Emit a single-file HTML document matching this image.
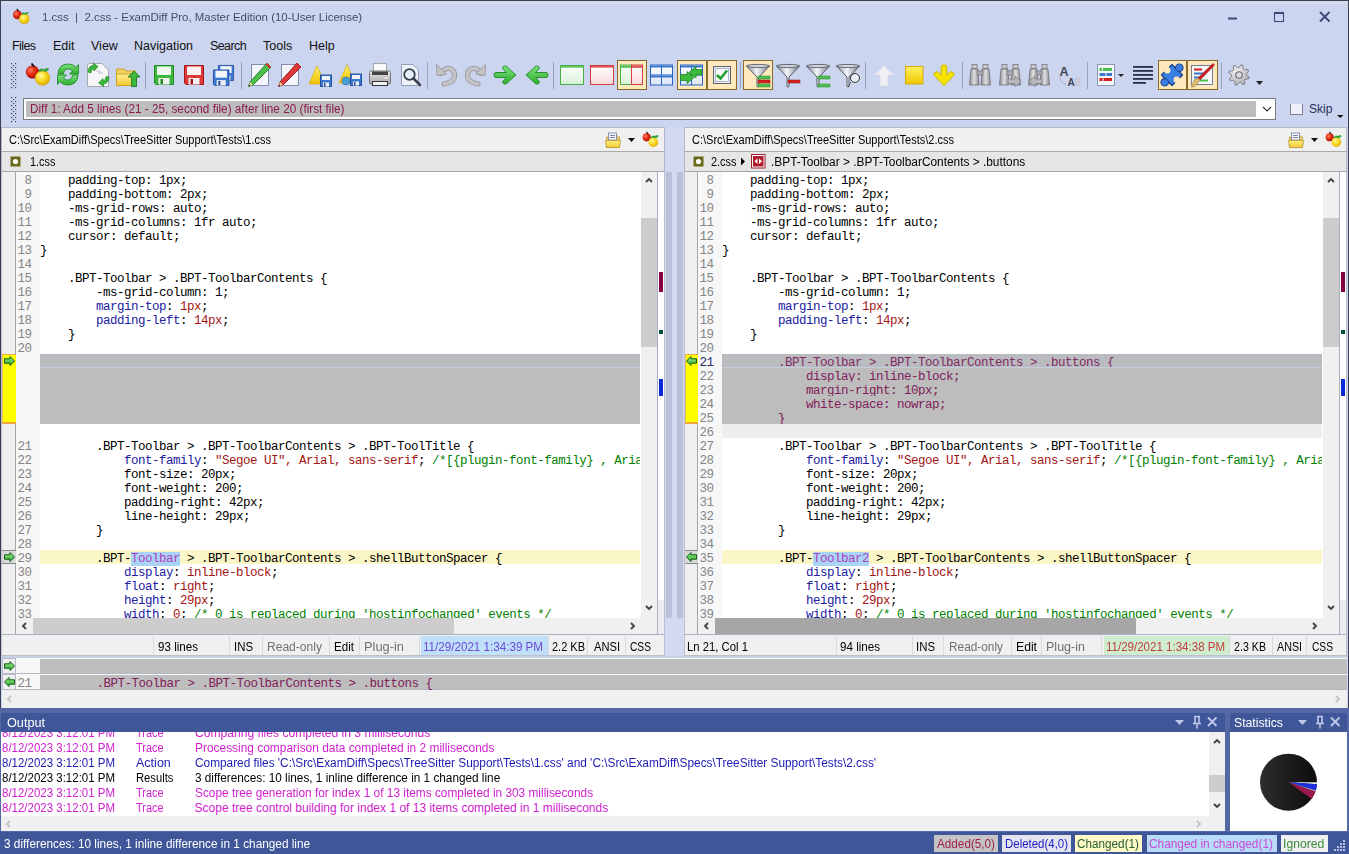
<!DOCTYPE html><html><head><meta charset="utf-8"><style>
*{margin:0;padding:0;box-sizing:border-box}
html,body{width:1349px;height:854px;overflow:hidden}
body{position:relative;background:#ccd5ef;font-family:"Liberation Sans",sans-serif;font-size:12px;color:#000}
.a{position:absolute}
.t{position:absolute;white-space:pre;line-height:14px}
.m{position:absolute;font-family:"Liberation Mono",monospace;font-size:12.5px;letter-spacing:-0.5px;white-space:pre;line-height:14px;height:14px}
.ln{position:absolute;font-family:"Liberation Mono",monospace;font-size:12.5px;letter-spacing:-0.5px;white-space:pre;line-height:14px;color:#848484;text-align:right;width:40px}
</style></head><body><div class="a" style="left:0;top:0;width:1349px;height:1px;background:#3b3f52"></div>
<div class="a" style="left:0;top:0;width:1px;height:854px;background:#3b3f52"></div>
<div class="a" style="left:1348px;top:0;width:1px;height:854px;background:#3b3f52"></div>
<div class="t" style="left:42px;top:10px;font-size:11.5px;color:#434b6e;transform:scaleX(0.995);transform-origin:0 0;">1.css  |  2.css - ExamDiff Pro, Master Edition (10-User License)</div>
<div class="t" style="left:12px;top:39px;font-size:12.5px;color:#111;letter-spacing:-0.6px">Files</div>
<div class="t" style="left:53px;top:39px;font-size:12.5px;color:#111;letter-spacing:0px">Edit</div>
<div class="t" style="left:91px;top:39px;font-size:12.5px;color:#111;letter-spacing:0px">View</div>
<div class="t" style="left:134px;top:39px;font-size:12.5px;color:#111;letter-spacing:0px">Navigation</div>
<div class="t" style="left:210px;top:39px;font-size:12.5px;color:#111;letter-spacing:-0.6px">Search</div>
<div class="t" style="left:263px;top:39px;font-size:12.5px;color:#111;letter-spacing:0px">Tools</div>
<div class="t" style="left:309px;top:39px;font-size:12.5px;color:#111;letter-spacing:0px">Help</div>
<svg class="a" style="left:1220px;top:8px" width="120" height="20"><rect x="8" y="9.5" width="9" height="2" fill="#3c4878"/><rect x="54.5" y="4.5" width="9" height="9" fill="none" stroke="#3c4878" stroke-width="1.1"/><rect x="54" y="4" width="10" height="2" fill="#3c4878"/><path d="M100 4 L109.5 13.5 M109.5 4 L100 13.5" stroke="#3c4878" stroke-width="1.9"/></svg>
<svg class="a" style="left:13px;top:8px" width="18" height="18"><g transform="scale(0.68)"><circle cx="6.5" cy="10" r="6.3" fill="url(#gRed)" stroke="#a01010" stroke-width="0.6"/>
<path d="M5.5 1.5 Q7 2.5 8 5" stroke="#111" stroke-width="1.6" fill="none"/>
<circle cx="16.5" cy="16" r="7.3" fill="url(#gOr)" stroke="#d0a000" stroke-width="0.6"/>
<path d="M13 9 Q14 5.5 17.5 7.5 Q16 10 13 9 Z M17 9 Q19.5 5 23 7 Q21 10.5 17 9 Z" fill="#39b43a" stroke="#1e7a20" stroke-width="0.5"/></g></svg>
<div class="a" style="left:1px;top:1px;width:1347px;height:5px;background:linear-gradient(#d8dced,#d3d8ec 60%,#ccd5ef)"></div>
<div class="a" style="left:23px;top:98px;width:1253px;height:22px;background:#fff;border:1px solid #7a7a7a"></div>
<div class="a" style="left:26px;top:101px;width:1230px;height:16px;background:#bdbdbd"></div>
<div class="t" style="left:30px;top:102px;font-size:12px;color:#8b1a4f;transform:scaleX(0.979);transform-origin:0 0;">Diff 1: Add 5 lines (21 - 25, second file) after line 20 (first file)</div>
<svg class="a" style="left:1260px;top:104px" width="90" height="18"><path d="M3 3 L7 7 L11 3" fill="none" stroke="#333" stroke-width="1.1"/><rect x="30.5" y="-1.5" width="12" height="12" fill="#eef1fa" stroke="#7c8294" stroke-width="1"/><path d="M77 11 L83.5 11 L80.25 14 Z" fill="#111"/></svg>
<div class="t" style="left:1309px;top:102px;font-size:12px;color:#283058">Skip</div>
<div class="a" style="left:665px;top:127px;width:19px;height:529px;background:#d3d9ee"></div>
<div class="a" style="left:666px;top:172px;width:6px;height:446px;background:#b9c1da"></div>
<div class="a" style="left:677px;top:172px;width:6px;height:446px;background:#b9c1da"></div>
<div class="a" style="left:672px;top:172px;width:5px;height:446px;background:#d5dbee"></div>
<div class="a" style="left:1px;top:127px;width:664px;height:25px;background:#f0f0f0;border:1px solid #b4b8c4;border-bottom-color:#aaaaaa"></div>
<div class="t" style="left:9px;top:133px;font-size:12px;color:#000;transform:scaleX(0.918);transform-origin:0 0;">C:\Src\ExamDiff\Specs\TreeSitter Support\Tests\1.css</div>
<div class="a" style="left:1px;top:152px;width:664px;height:20px;background:#e6e6e6;border-left:1px solid #b4b8c4;border-right:1px solid #b4b8c4;border-bottom:1px solid #a0a4ae"></div>
<svg class="a" style="left:10px;top:156px" width="12" height="12"><rect x="0.5" y="0.5" width="10" height="10" fill="#6b6a1a"/><circle cx="5.5" cy="5.5" r="2.6" fill="#fff"/></svg>
<div class="t" style="left:29.5px;top:155px;font-size:12px;color:#000;transform:scaleX(0.911);transform-origin:0 0;">1.css</div>
<div class="a" style="left:1px;top:172px;width:664px;height:463px;background:#fff;border-left:1px solid #bcc0cc;border-right:1px solid #bcc0cc;border-bottom:1px solid #a8b0c4"></div>
<div class="a" style="left:2px;top:172px;width:13px;height:462px;background:#efefef"></div>
<div class="a" style="left:15px;top:172px;width:1px;height:462px;background:#a6a6a6"></div>
<div class="a" style="left:16px;top:172px;width:24px;height:446px;background:#f7f7f7"></div>
<div class="ln" style="left:-8.5px;top:174px;height:15px;overflow:hidden;color:#858585">8</div>
<div class="m" style="left:40px;top:174px;width:600px;height:15px;overflow:hidden"><span style="color:#000">    padding-top: 1px;</span></div>
<div class="ln" style="left:-8.5px;top:188px;height:15px;overflow:hidden;color:#858585">9</div>
<div class="m" style="left:40px;top:188px;width:600px;height:15px;overflow:hidden"><span style="color:#000">    padding-bottom: 2px;</span></div>
<div class="ln" style="left:-8.5px;top:202px;height:15px;overflow:hidden;color:#858585">10</div>
<div class="m" style="left:40px;top:202px;width:600px;height:15px;overflow:hidden"><span style="color:#000">    -ms-grid-rows: auto;</span></div>
<div class="ln" style="left:-8.5px;top:216px;height:15px;overflow:hidden;color:#858585">11</div>
<div class="m" style="left:40px;top:216px;width:600px;height:15px;overflow:hidden"><span style="color:#000">    -ms-grid-columns: 1fr auto;</span></div>
<div class="ln" style="left:-8.5px;top:230px;height:15px;overflow:hidden;color:#858585">12</div>
<div class="m" style="left:40px;top:230px;width:600px;height:15px;overflow:hidden"><span style="color:#000">    cursor: default;</span></div>
<div class="ln" style="left:-8.5px;top:244px;height:15px;overflow:hidden;color:#858585">13</div>
<div class="m" style="left:40px;top:244px;width:600px;height:15px;overflow:hidden"><span style="color:#000">}</span></div>
<div class="ln" style="left:-8.5px;top:258px;height:15px;overflow:hidden;color:#858585">14</div>
<div class="ln" style="left:-8.5px;top:272px;height:15px;overflow:hidden;color:#858585">15</div>
<div class="m" style="left:40px;top:272px;width:600px;height:15px;overflow:hidden"><span style="color:#000">    .BPT-Toolbar &gt; .BPT-ToolbarContents {</span></div>
<div class="ln" style="left:-8.5px;top:286px;height:15px;overflow:hidden;color:#858585">16</div>
<div class="m" style="left:40px;top:286px;width:600px;height:15px;overflow:hidden"><span style="color:#000">        -ms-grid-column: 1;</span></div>
<div class="ln" style="left:-8.5px;top:300px;height:15px;overflow:hidden;color:#858585">17</div>
<div class="m" style="left:40px;top:300px;width:600px;height:15px;overflow:hidden"><span style="color:#000">        </span><span style="color:#2020a0">margin-top</span><span style="color:#000">: </span><span style="color:#a31515">1px</span><span style="color:#000">;</span></div>
<div class="ln" style="left:-8.5px;top:314px;height:15px;overflow:hidden;color:#858585">18</div>
<div class="m" style="left:40px;top:314px;width:600px;height:15px;overflow:hidden"><span style="color:#000">        </span><span style="color:#2020a0">padding-left</span><span style="color:#000">: </span><span style="color:#a31515">14px</span><span style="color:#000">;</span></div>
<div class="ln" style="left:-8.5px;top:328px;height:15px;overflow:hidden;color:#858585">19</div>
<div class="m" style="left:40px;top:328px;width:600px;height:15px;overflow:hidden"><span style="color:#000">    }</span></div>
<div class="ln" style="left:-8.5px;top:342px;height:15px;overflow:hidden;color:#858585">20</div>
<div class="a" style="left:40px;top:354px;width:600px;height:14px;background:#bdbdbd"></div>
<div class="a" style="left:40px;top:368px;width:600px;height:14px;background:#bdbdbd"></div>
<div class="a" style="left:40px;top:382px;width:600px;height:14px;background:#bdbdbd"></div>
<div class="a" style="left:40px;top:396px;width:600px;height:14px;background:#bdbdbd"></div>
<div class="a" style="left:40px;top:410px;width:600px;height:14px;background:#bdbdbd"></div>
<div class="ln" style="left:-8.5px;top:440px;height:15px;overflow:hidden;color:#858585">21</div>
<div class="m" style="left:40px;top:440px;width:600px;height:15px;overflow:hidden"><span style="color:#000">        .BPT-Toolbar &gt; .BPT-ToolbarContents &gt; .BPT-ToolTitle {</span></div>
<div class="ln" style="left:-8.5px;top:454px;height:15px;overflow:hidden;color:#858585">22</div>
<div class="m" style="left:40px;top:454px;width:600px;height:15px;overflow:hidden"><span style="color:#000">            </span><span style="color:#2020a0">font-family</span><span style="color:#000">: </span><span style="color:#a31515">&quot;Segoe UI&quot;, Arial, sans-serif</span><span style="color:#000">; </span><span style="color:#008000">/*[{plugin-font-family} , Arial, sans-serif}]*/</span></div>
<div class="ln" style="left:-8.5px;top:468px;height:15px;overflow:hidden;color:#858585">23</div>
<div class="m" style="left:40px;top:468px;width:600px;height:15px;overflow:hidden"><span style="color:#000">            font-size: 20px;</span></div>
<div class="ln" style="left:-8.5px;top:482px;height:15px;overflow:hidden;color:#858585">24</div>
<div class="m" style="left:40px;top:482px;width:600px;height:15px;overflow:hidden"><span style="color:#000">            font-weight: 200;</span></div>
<div class="ln" style="left:-8.5px;top:496px;height:15px;overflow:hidden;color:#858585">25</div>
<div class="m" style="left:40px;top:496px;width:600px;height:15px;overflow:hidden"><span style="color:#000">            padding-right: 42px;</span></div>
<div class="ln" style="left:-8.5px;top:510px;height:15px;overflow:hidden;color:#858585">26</div>
<div class="m" style="left:40px;top:510px;width:600px;height:15px;overflow:hidden"><span style="color:#000">            line-height: 29px;</span></div>
<div class="ln" style="left:-8.5px;top:524px;height:15px;overflow:hidden;color:#858585">27</div>
<div class="m" style="left:40px;top:524px;width:600px;height:15px;overflow:hidden"><span style="color:#000">        }</span></div>
<div class="ln" style="left:-8.5px;top:538px;height:15px;overflow:hidden;color:#858585">28</div>
<div class="a" style="left:40px;top:550px;width:600px;height:14px;background:#fbf6c8"></div>
<div class="ln" style="left:-8.5px;top:552px;height:15px;overflow:hidden;color:#858585">29</div>
<div class="m" style="left:40px;top:552px;width:600px;height:15px;overflow:hidden"><span style="color:#000">        .BPT-</span><span style="background:#aad4f5;color:#b040c0">Toolbar</span><span style="color:#000"> &gt; .BPT-ToolbarContents &gt; .shellButtonSpacer {</span></div>
<div class="ln" style="left:-8.5px;top:566px;height:15px;overflow:hidden;color:#858585">30</div>
<div class="m" style="left:40px;top:566px;width:600px;height:15px;overflow:hidden"><span style="color:#000">            </span><span style="color:#2020a0">display</span><span style="color:#000">: </span><span style="color:#a31515">inline-block</span><span style="color:#000">;</span></div>
<div class="ln" style="left:-8.5px;top:580px;height:15px;overflow:hidden;color:#858585">31</div>
<div class="m" style="left:40px;top:580px;width:600px;height:15px;overflow:hidden"><span style="color:#000">            </span><span style="color:#2020a0">float</span><span style="color:#000">: </span><span style="color:#a31515">right</span><span style="color:#000">;</span></div>
<div class="ln" style="left:-8.5px;top:594px;height:15px;overflow:hidden;color:#858585">32</div>
<div class="m" style="left:40px;top:594px;width:600px;height:15px;overflow:hidden"><span style="color:#000">            </span><span style="color:#2020a0">height</span><span style="color:#000">: </span><span style="color:#a31515">29px</span><span style="color:#000">;</span></div>
<div class="ln" style="left:-8.5px;top:608px;height:10px;overflow:hidden;color:#858585">33</div>
<div class="m" style="left:40px;top:608px;width:600px;height:10px;overflow:hidden"><span style="color:#000">            </span><span style="color:#2020a0">width</span><span style="color:#000">: </span><span style="color:#a31515">0</span><span style="color:#000">; </span><span style="color:#008000">/* 0 is replaced during &#x27;hostinfochanged&#x27; events */</span></div>
<div class="a" style="left:40px;top:354px;width:600px;height:13px;background:rgba(150,160,200,0.08)"></div>
<div class="a" style="left:40px;top:367px;width:600px;height:1px;background:#c6cade"></div>
<div class="a" style="left:2px;top:354px;width:14px;height:70px;background:#ffff00;border-top:1px solid #f4a640;border-bottom:2px solid #f4a640;border-left:1px solid #e8c060"></div>
<svg class="a" style="left:4px;top:356px" width="11" height="10"><defs><linearGradient id="ga4356" x1="0" y1="0" x2="0" y2="1"><stop offset="0" stop-color="#9af08a"/><stop offset="1" stop-color="#2ea82e"/></linearGradient></defs><path d="M10.5 5 L6 0.5 L6 2.8 L0.5 2.8 L0.5 7.2 L6 7.2 L6 9.5 Z" fill="url(#ga4356)" stroke="#0f5a14" stroke-width="1" stroke-linejoin="miter"/></svg>
<div class="a" style="left:2px;top:550px;width:14px;height:14px;background:#d8d8d8;border-top:1px solid #8a8a8a;border-bottom:1px solid #8a8a8a"></div>
<svg class="a" style="left:4px;top:552px" width="11" height="10"><defs><linearGradient id="ga4552" x1="0" y1="0" x2="0" y2="1"><stop offset="0" stop-color="#9af08a"/><stop offset="1" stop-color="#2ea82e"/></linearGradient></defs><path d="M10.5 5 L6 0.5 L6 2.8 L0.5 2.8 L0.5 7.2 L6 7.2 L6 9.5 Z" fill="url(#ga4552)" stroke="#0f5a14" stroke-width="1" stroke-linejoin="miter"/></svg>
<div class="a" style="left:641px;top:172px;width:16px;height:462px;background:#f0f0f0"></div>
<div class="a" style="left:641px;top:218px;width:16px;height:129px;background:#cdcdcd"></div>
<svg class="a" style="left:645px;top:177px" width="8" height="8"><path d="M1 5 L4 2 L7 5" fill="none" stroke="#444" stroke-width="1.9"/></svg>
<svg class="a" style="left:645px;top:604px" width="8" height="8"><path d="M1 2 L4 5 L7 2" fill="none" stroke="#444" stroke-width="1.9"/></svg>
<div class="a" style="left:657px;top:172px;width:1px;height:462px;background:#a6aebf"></div>
<div class="a" style="left:658px;top:172px;width:6px;height:462px;background:#fff"></div>
<div class="a" style="left:658px;top:600px;width:6px;height:34px;background:#ececf0"></div>
<div class="a" style="left:659px;top:272px;width:4px;height:20px;background:#800040"></div>
<div class="a" style="left:659px;top:330px;width:4px;height:4px;background:#00503a"></div>
<div class="a" style="left:659px;top:379px;width:4px;height:17px;background:#0a28d8"></div>
<div class="a" style="left:15px;top:618px;width:626px;height:16px;background:#f0f0f0;border-left:1px solid #a6a6a6"></div>
<div class="a" style="left:33px;top:618px;width:421px;height:16px;background:#cdcdcd"></div>
<svg class="a" style="left:21px;top:622px" width="8" height="8"><path d="M5 1 L2 4 L5 7" fill="none" stroke="#444" stroke-width="1.9"/></svg>
<svg class="a" style="left:629px;top:622px" width="8" height="8"><path d="M2 1 L5 4 L2 7" fill="none" stroke="#444" stroke-width="1.9"/></svg>
<div class="a" style="left:684px;top:127px;width:663px;height:25px;background:#f0f0f0;border:1px solid #b4b8c4;border-bottom-color:#aaaaaa"></div>
<div class="t" style="left:692px;top:133px;font-size:12px;color:#000;transform:scaleX(0.918);transform-origin:0 0;">C:\Src\ExamDiff\Specs\TreeSitter Support\Tests\2.css</div>
<div class="a" style="left:684px;top:152px;width:663px;height:20px;background:#e6e6e6;border-left:1px solid #b4b8c4;border-right:1px solid #b4b8c4;border-bottom:1px solid #a0a4ae"></div>
<svg class="a" style="left:693px;top:156px" width="12" height="12"><rect x="0.5" y="0.5" width="10" height="10" fill="#6b6a1a"/><circle cx="5.5" cy="5.5" r="2.6" fill="#fff"/></svg>
<div class="t" style="left:711px;top:155px;font-size:12px;color:#000;transform:scaleX(0.911);transform-origin:0 0;">2.css</div>
<svg class="a" style="left:740px;top:154px" width="30" height="16"><path d="M1 3.5 L5 7.5 L1 11.5 Z" fill="#000"/><rect x="11.5" y="0.5" width="13.5" height="13.5" fill="#fff" stroke="#a02030" stroke-width="1"/><rect x="13" y="2" width="10.5" height="10.5" fill="#b01e2e"/><path d="M17.5 4.5 L14.5 7.25 L17.5 10 Z M19 4.5 L22 7.25 L19 10 Z" fill="#fff"/></svg>
<div class="t" style="left:771.2px;top:155px;font-size:12px;color:#000;transform:scaleX(0.990);transform-origin:0 0;">.BPT-Toolbar &gt; .BPT-ToolbarContents &gt; .buttons</div>
<div class="a" style="left:684px;top:172px;width:663px;height:463px;background:#fff;border-left:1px solid #bcc0cc;border-right:1px solid #bcc0cc;border-bottom:1px solid #a8b0c4"></div>
<div class="a" style="left:685px;top:172px;width:12px;height:462px;background:#efefef"></div>
<div class="a" style="left:697px;top:172px;width:1px;height:462px;background:#a6a6a6"></div>
<div class="a" style="left:698px;top:172px;width:24px;height:446px;background:#f7f7f7"></div>
<div class="ln" style="left:673.5px;top:174px;height:15px;overflow:hidden;color:#858585">8</div>
<div class="m" style="left:722px;top:174px;width:600px;height:15px;overflow:hidden"><span style="color:#000">    padding-top: 1px;</span></div>
<div class="ln" style="left:673.5px;top:188px;height:15px;overflow:hidden;color:#858585">9</div>
<div class="m" style="left:722px;top:188px;width:600px;height:15px;overflow:hidden"><span style="color:#000">    padding-bottom: 2px;</span></div>
<div class="ln" style="left:673.5px;top:202px;height:15px;overflow:hidden;color:#858585">10</div>
<div class="m" style="left:722px;top:202px;width:600px;height:15px;overflow:hidden"><span style="color:#000">    -ms-grid-rows: auto;</span></div>
<div class="ln" style="left:673.5px;top:216px;height:15px;overflow:hidden;color:#858585">11</div>
<div class="m" style="left:722px;top:216px;width:600px;height:15px;overflow:hidden"><span style="color:#000">    -ms-grid-columns: 1fr auto;</span></div>
<div class="ln" style="left:673.5px;top:230px;height:15px;overflow:hidden;color:#858585">12</div>
<div class="m" style="left:722px;top:230px;width:600px;height:15px;overflow:hidden"><span style="color:#000">    cursor: default;</span></div>
<div class="ln" style="left:673.5px;top:244px;height:15px;overflow:hidden;color:#858585">13</div>
<div class="m" style="left:722px;top:244px;width:600px;height:15px;overflow:hidden"><span style="color:#000">}</span></div>
<div class="ln" style="left:673.5px;top:258px;height:15px;overflow:hidden;color:#858585">14</div>
<div class="ln" style="left:673.5px;top:272px;height:15px;overflow:hidden;color:#858585">15</div>
<div class="m" style="left:722px;top:272px;width:600px;height:15px;overflow:hidden"><span style="color:#000">    .BPT-Toolbar &gt; .BPT-ToolbarContents {</span></div>
<div class="ln" style="left:673.5px;top:286px;height:15px;overflow:hidden;color:#858585">16</div>
<div class="m" style="left:722px;top:286px;width:600px;height:15px;overflow:hidden"><span style="color:#000">        -ms-grid-column: 1;</span></div>
<div class="ln" style="left:673.5px;top:300px;height:15px;overflow:hidden;color:#858585">17</div>
<div class="m" style="left:722px;top:300px;width:600px;height:15px;overflow:hidden"><span style="color:#000">        </span><span style="color:#2020a0">margin-top</span><span style="color:#000">: </span><span style="color:#a31515">1px</span><span style="color:#000">;</span></div>
<div class="ln" style="left:673.5px;top:314px;height:15px;overflow:hidden;color:#858585">18</div>
<div class="m" style="left:722px;top:314px;width:600px;height:15px;overflow:hidden"><span style="color:#000">        </span><span style="color:#2020a0">padding-left</span><span style="color:#000">: </span><span style="color:#a31515">14px</span><span style="color:#000">;</span></div>
<div class="ln" style="left:673.5px;top:328px;height:15px;overflow:hidden;color:#858585">19</div>
<div class="m" style="left:722px;top:328px;width:600px;height:15px;overflow:hidden"><span style="color:#000">    }</span></div>
<div class="ln" style="left:673.5px;top:342px;height:15px;overflow:hidden;color:#858585">20</div>
<div class="a" style="left:722px;top:354px;width:600px;height:14px;background:#bdbdbd"></div>
<div class="ln" style="left:673.5px;top:356px;height:15px;overflow:hidden;color:#2b2b6a">21</div>
<div class="m" style="left:722px;top:356px;width:600px;height:15px;overflow:hidden"><span style="color:#80205a">        .BPT-Toolbar &gt; .BPT-ToolbarContents &gt; .buttons {</span></div>
<div class="a" style="left:722px;top:368px;width:600px;height:14px;background:#bdbdbd"></div>
<div class="ln" style="left:673.5px;top:370px;height:15px;overflow:hidden;color:#858585">22</div>
<div class="m" style="left:722px;top:370px;width:600px;height:15px;overflow:hidden"><span style="color:#80205a">            display: inline-block;</span></div>
<div class="a" style="left:722px;top:382px;width:600px;height:14px;background:#bdbdbd"></div>
<div class="ln" style="left:673.5px;top:384px;height:15px;overflow:hidden;color:#858585">23</div>
<div class="m" style="left:722px;top:384px;width:600px;height:15px;overflow:hidden"><span style="color:#80205a">            margin-right: 10px;</span></div>
<div class="a" style="left:722px;top:396px;width:600px;height:14px;background:#bdbdbd"></div>
<div class="ln" style="left:673.5px;top:398px;height:15px;overflow:hidden;color:#858585">24</div>
<div class="m" style="left:722px;top:398px;width:600px;height:15px;overflow:hidden"><span style="color:#80205a">            white-space: nowrap;</span></div>
<div class="a" style="left:722px;top:410px;width:600px;height:14px;background:#bdbdbd"></div>
<div class="ln" style="left:673.5px;top:412px;height:15px;overflow:hidden;color:#858585">25</div>
<div class="m" style="left:722px;top:412px;width:600px;height:15px;overflow:hidden"><span style="color:#80205a">        }</span></div>
<div class="a" style="left:722px;top:424px;width:600px;height:14px;background:#eeeeee"></div>
<div class="ln" style="left:673.5px;top:426px;height:15px;overflow:hidden;color:#858585">26</div>
<div class="ln" style="left:673.5px;top:440px;height:15px;overflow:hidden;color:#858585">27</div>
<div class="m" style="left:722px;top:440px;width:600px;height:15px;overflow:hidden"><span style="color:#000">        .BPT-Toolbar &gt; .BPT-ToolbarContents &gt; .BPT-ToolTitle {</span></div>
<div class="ln" style="left:673.5px;top:454px;height:15px;overflow:hidden;color:#858585">28</div>
<div class="m" style="left:722px;top:454px;width:600px;height:15px;overflow:hidden"><span style="color:#000">            </span><span style="color:#2020a0">font-family</span><span style="color:#000">: </span><span style="color:#a31515">&quot;Segoe UI&quot;, Arial, sans-serif</span><span style="color:#000">; </span><span style="color:#008000">/*[{plugin-font-family} , Arial, sans-serif}]*/</span></div>
<div class="ln" style="left:673.5px;top:468px;height:15px;overflow:hidden;color:#858585">29</div>
<div class="m" style="left:722px;top:468px;width:600px;height:15px;overflow:hidden"><span style="color:#000">            font-size: 20px;</span></div>
<div class="ln" style="left:673.5px;top:482px;height:15px;overflow:hidden;color:#858585">30</div>
<div class="m" style="left:722px;top:482px;width:600px;height:15px;overflow:hidden"><span style="color:#000">            font-weight: 200;</span></div>
<div class="ln" style="left:673.5px;top:496px;height:15px;overflow:hidden;color:#858585">31</div>
<div class="m" style="left:722px;top:496px;width:600px;height:15px;overflow:hidden"><span style="color:#000">            padding-right: 42px;</span></div>
<div class="ln" style="left:673.5px;top:510px;height:15px;overflow:hidden;color:#858585">32</div>
<div class="m" style="left:722px;top:510px;width:600px;height:15px;overflow:hidden"><span style="color:#000">            line-height: 29px;</span></div>
<div class="ln" style="left:673.5px;top:524px;height:15px;overflow:hidden;color:#858585">33</div>
<div class="m" style="left:722px;top:524px;width:600px;height:15px;overflow:hidden"><span style="color:#000">        }</span></div>
<div class="ln" style="left:673.5px;top:538px;height:15px;overflow:hidden;color:#858585">34</div>
<div class="a" style="left:722px;top:550px;width:600px;height:14px;background:#fbf6c8"></div>
<div class="ln" style="left:673.5px;top:552px;height:15px;overflow:hidden;color:#858585">35</div>
<div class="m" style="left:722px;top:552px;width:600px;height:15px;overflow:hidden"><span style="color:#000">        .BPT-</span><span style="background:#aad4f5;color:#b040c0">Toolbar2</span><span style="color:#000"> &gt; .BPT-ToolbarContents &gt; .shellButtonSpacer {</span></div>
<div class="ln" style="left:673.5px;top:566px;height:15px;overflow:hidden;color:#858585">36</div>
<div class="m" style="left:722px;top:566px;width:600px;height:15px;overflow:hidden"><span style="color:#000">            </span><span style="color:#2020a0">display</span><span style="color:#000">: </span><span style="color:#a31515">inline-block</span><span style="color:#000">;</span></div>
<div class="ln" style="left:673.5px;top:580px;height:15px;overflow:hidden;color:#858585">37</div>
<div class="m" style="left:722px;top:580px;width:600px;height:15px;overflow:hidden"><span style="color:#000">            </span><span style="color:#2020a0">float</span><span style="color:#000">: </span><span style="color:#a31515">right</span><span style="color:#000">;</span></div>
<div class="ln" style="left:673.5px;top:594px;height:15px;overflow:hidden;color:#858585">38</div>
<div class="m" style="left:722px;top:594px;width:600px;height:15px;overflow:hidden"><span style="color:#000">            </span><span style="color:#2020a0">height</span><span style="color:#000">: </span><span style="color:#a31515">29px</span><span style="color:#000">;</span></div>
<div class="ln" style="left:673.5px;top:608px;height:10px;overflow:hidden;color:#858585">39</div>
<div class="m" style="left:722px;top:608px;width:600px;height:10px;overflow:hidden"><span style="color:#000">            </span><span style="color:#2020a0">width</span><span style="color:#000">: </span><span style="color:#a31515">0</span><span style="color:#000">; </span><span style="color:#008000">/* 0 is replaced during &#x27;hostinfochanged&#x27; events */</span></div>
<div class="a" style="left:722px;top:354px;width:600px;height:13px;background:rgba(150,160,200,0.08)"></div>
<div class="a" style="left:722px;top:367px;width:600px;height:1px;background:#c6cade"></div>
<div class="a" style="left:685px;top:354px;width:13px;height:70px;background:#ffff00;border-top:1px solid #f4a640;border-bottom:2px solid #f4a640;border-left:1px solid #e8c060"></div>
<svg class="a" style="left:686px;top:356px" width="11" height="10"><defs><linearGradient id="ga686356" x1="0" y1="0" x2="0" y2="1"><stop offset="0" stop-color="#9af08a"/><stop offset="1" stop-color="#2ea82e"/></linearGradient></defs><path d="M0.5 5 L5 0.5 L5 2.8 L10.5 2.8 L10.5 7.2 L5 7.2 L5 9.5 Z" fill="url(#ga686356)" stroke="#0f5a14" stroke-width="1" stroke-linejoin="miter"/></svg>
<div class="a" style="left:685px;top:550px;width:13px;height:14px;background:#d8d8d8;border-top:1px solid #8a8a8a;border-bottom:1px solid #8a8a8a"></div>
<svg class="a" style="left:686px;top:552px" width="11" height="10"><defs><linearGradient id="ga686552" x1="0" y1="0" x2="0" y2="1"><stop offset="0" stop-color="#9af08a"/><stop offset="1" stop-color="#2ea82e"/></linearGradient></defs><path d="M0.5 5 L5 0.5 L5 2.8 L10.5 2.8 L10.5 7.2 L5 7.2 L5 9.5 Z" fill="url(#ga686552)" stroke="#0f5a14" stroke-width="1" stroke-linejoin="miter"/></svg>
<div class="a" style="left:1323px;top:172px;width:16px;height:462px;background:#f0f0f0"></div>
<div class="a" style="left:1323px;top:218px;width:16px;height:129px;background:#cdcdcd"></div>
<svg class="a" style="left:1327px;top:177px" width="8" height="8"><path d="M1 5 L4 2 L7 5" fill="none" stroke="#444" stroke-width="1.9"/></svg>
<svg class="a" style="left:1327px;top:604px" width="8" height="8"><path d="M1 2 L4 5 L7 2" fill="none" stroke="#444" stroke-width="1.9"/></svg>
<div class="a" style="left:1339px;top:172px;width:1px;height:462px;background:#a6aebf"></div>
<div class="a" style="left:1340px;top:172px;width:6px;height:462px;background:#fff"></div>
<div class="a" style="left:1340px;top:600px;width:6px;height:34px;background:#ececf0"></div>
<div class="a" style="left:1341px;top:272px;width:4px;height:20px;background:#800040"></div>
<div class="a" style="left:1341px;top:330px;width:4px;height:4px;background:#00503a"></div>
<div class="a" style="left:1341px;top:379px;width:4px;height:17px;background:#0a28d8"></div>
<div class="a" style="left:697px;top:618px;width:626px;height:16px;background:#f0f0f0;border-left:1px solid #a6a6a6"></div>
<div class="a" style="left:715px;top:618px;width:421px;height:16px;background:#a6a6a6"></div>
<svg class="a" style="left:703px;top:622px" width="8" height="8"><path d="M5 1 L2 4 L5 7" fill="none" stroke="#444" stroke-width="1.9"/></svg>
<svg class="a" style="left:1311px;top:622px" width="8" height="8"><path d="M2 1 L5 4 L2 7" fill="none" stroke="#444" stroke-width="1.9"/></svg>
<div class="a" style="left:1px;top:634px;width:664px;height:22px;background:#f0f0f0;border-left:1px solid #bcc0cc;border-right:1px solid #bcc0cc;border-top:1px solid #a8b0c4;border-bottom:1px solid #bcc0cc"></div>
<div class="a" style="left:153px;top:636px;width:1px;height:19px;background:#dadada"></div>
<div class="a" style="left:229px;top:636px;width:1px;height:19px;background:#dadada"></div>
<div class="a" style="left:262px;top:636px;width:1px;height:19px;background:#dadada"></div>
<div class="a" style="left:329px;top:636px;width:1px;height:19px;background:#dadada"></div>
<div class="a" style="left:359px;top:636px;width:1px;height:19px;background:#dadada"></div>
<div class="a" style="left:419px;top:636px;width:1px;height:19px;background:#dadada"></div>
<div class="a" style="left:548px;top:636px;width:1px;height:19px;background:#dadada"></div>
<div class="a" style="left:587px;top:636px;width:1px;height:19px;background:#dadada"></div>
<div class="a" style="left:625px;top:636px;width:1px;height:19px;background:#dadada"></div>
<div class="t" style="left:158px;top:640px;font-size:12px;color:#000;transform:scaleX(0.967);transform-origin:0 0;">93 lines</div>
<div class="t" style="left:234px;top:640px;font-size:12px;color:#000;transform:scaleX(0.950);transform-origin:0 0;">INS</div>
<div class="t" style="left:267px;top:640px;font-size:12px;color:#707070;transform:scaleX(1.005);transform-origin:0 0;">Read-only</div>
<div class="t" style="left:334px;top:640px;font-size:12px;color:#000;transform:scaleX(0.967);transform-origin:0 0;">Edit</div>
<div class="t" style="left:364px;top:640px;font-size:12px;color:#707070;transform:scaleX(1.071);transform-origin:0 0;">Plug-in</div>
<div class="a" style="left:421px;top:636px;width:127px;height:19px;background:#bfe0f8"></div>
<div class="t" style="left:423px;top:640px;font-size:12px;color:#6a4ad8;transform:scaleX(0.969);transform-origin:0 0;">11/29/2021 1:34:39 PM</div>
<div class="t" style="left:552px;top:640px;font-size:12px;color:#000;transform:scaleX(0.917);transform-origin:0 0;">2.2 KB</div>
<div class="t" style="left:594px;top:640px;font-size:12px;color:#000;transform:scaleX(0.929);transform-origin:0 0;">ANSI</div>
<div class="t" style="left:630px;top:640px;font-size:12px;color:#000;transform:scaleX(0.851);transform-origin:0 0;">CSS</div>
<div class="a" style="left:684px;top:634px;width:663px;height:22px;background:#f0f0f0;border-left:1px solid #bcc0cc;border-right:1px solid #bcc0cc;border-top:1px solid #a8b0c4;border-bottom:1px solid #bcc0cc"></div>
<div class="a" style="left:836px;top:636px;width:1px;height:19px;background:#dadada"></div>
<div class="a" style="left:912px;top:636px;width:1px;height:19px;background:#dadada"></div>
<div class="a" style="left:943px;top:636px;width:1px;height:19px;background:#dadada"></div>
<div class="a" style="left:1011px;top:636px;width:1px;height:19px;background:#dadada"></div>
<div class="a" style="left:1041px;top:636px;width:1px;height:19px;background:#dadada"></div>
<div class="a" style="left:1101px;top:636px;width:1px;height:19px;background:#dadada"></div>
<div class="a" style="left:1229px;top:636px;width:1px;height:19px;background:#dadada"></div>
<div class="a" style="left:1272px;top:636px;width:1px;height:19px;background:#dadada"></div>
<div class="a" style="left:1306px;top:636px;width:1px;height:19px;background:#dadada"></div>
<div class="t" style="left:687px;top:640px;font-size:12px;color:#000;transform:scaleX(0.943);transform-origin:0 0;">Ln 21, Col 1</div>
<div class="t" style="left:840px;top:640px;font-size:12px;color:#000;transform:scaleX(0.967);transform-origin:0 0;">94 lines</div>
<div class="t" style="left:916px;top:640px;font-size:12px;color:#000;transform:scaleX(0.950);transform-origin:0 0;">INS</div>
<div class="t" style="left:949px;top:640px;font-size:12px;color:#707070;transform:scaleX(0.987);transform-origin:0 0;">Read-only</div>
<div class="t" style="left:1016px;top:640px;font-size:12px;color:#000;transform:scaleX(1.016);transform-origin:0 0;">Edit</div>
<div class="t" style="left:1046px;top:640px;font-size:12px;color:#707070;transform:scaleX(1.044);transform-origin:0 0;">Plug-in</div>
<div class="a" style="left:1104px;top:636px;width:125px;height:19px;background:#cfeccf"></div>
<div class="t" style="left:1106px;top:640px;font-size:12px;color:#c04040;transform:scaleX(0.961);transform-origin:0 0;">11/29/2021 1:34:38 PM</div>
<div class="t" style="left:1234px;top:640px;font-size:12px;color:#000;transform:scaleX(0.889);transform-origin:0 0;">2.3 KB</div>
<div class="t" style="left:1277px;top:640px;font-size:12px;color:#000;transform:scaleX(0.893);transform-origin:0 0;">ANSI</div>
<div class="t" style="left:1312px;top:640px;font-size:12px;color:#000;transform:scaleX(0.851);transform-origin:0 0;">CSS</div>
<div class="a" style="left:1px;top:656px;width:1347px;height:2px;background:#c8d0e4"></div>
<div class="a" style="left:2px;top:658px;width:1345px;height:16px;background:#bebebe;border-top:1px solid #f8f8f8;border-bottom:1px solid #b0b6c4"></div>
<div class="a" style="left:2px;top:658px;width:14px;height:16px;background:#f0f0f0;border:1px solid #b8bcc8"></div>
<div class="a" style="left:16px;top:659px;width:24px;height:14px;background:#f7f7f7"></div>
<div class="a" style="left:2px;top:674px;width:1345px;height:16px;background:#bebebe;border-top:1px solid #f8f8f8;border-bottom:1px solid #b0b6c4"></div>
<div class="a" style="left:2px;top:674px;width:14px;height:16px;background:#f0f0f0;border:1px solid #b8bcc8"></div>
<div class="a" style="left:16px;top:675px;width:24px;height:14px;background:#f7f7f7"></div>
<svg class="a" style="left:4px;top:661px" width="11" height="10"><defs><linearGradient id="ga4661" x1="0" y1="0" x2="0" y2="1"><stop offset="0" stop-color="#9af08a"/><stop offset="1" stop-color="#2ea82e"/></linearGradient></defs><path d="M10.5 5 L6 0.5 L6 2.8 L0.5 2.8 L0.5 7.2 L6 7.2 L6 9.5 Z" fill="url(#ga4661)" stroke="#0f5a14" stroke-width="1" stroke-linejoin="miter"/></svg>
<svg class="a" style="left:4px;top:677px" width="11" height="10"><defs><linearGradient id="ga4677" x1="0" y1="0" x2="0" y2="1"><stop offset="0" stop-color="#9af08a"/><stop offset="1" stop-color="#2ea82e"/></linearGradient></defs><path d="M0.5 5 L5 0.5 L5 2.8 L10.5 2.8 L10.5 7.2 L5 7.2 L5 9.5 Z" fill="url(#ga4677)" stroke="#0f5a14" stroke-width="1" stroke-linejoin="miter"/></svg>
<div class="ln" style="left:-8.5px;top:677px;color:#858585">21</div>
<div class="m" style="left:40.5px;top:677px;color:#80205a">        .BPT-Toolbar &gt; .BPT-ToolbarContents &gt; .buttons {</div>
<div class="a" style="left:2px;top:690px;width:1345px;height:18px;background:#f0f0f0"></div>
<svg class="a" style="left:6px;top:695px" width="8" height="8"><path d="M5 1 L2 4 L5 7" fill="none" stroke="#c4c4c4" stroke-width="1.9"/></svg>
<svg class="a" style="left:1334px;top:695px" width="8" height="8"><path d="M2 1 L5 4 L2 7" fill="none" stroke="#c4c4c4" stroke-width="1.9"/></svg>
<div class="a" style="left:0;top:708px;width:1349px;height:146px;background:#5568a4"></div>
<div class="a" style="left:1px;top:713px;width:1224px;height:19px;background:#3f5799"></div>
<div class="t" style="left:7px;top:716px;font-size:12.3px;color:#fff;transform:scaleX(1.029);transform-origin:0 0;">Output</div>
<div class="a" style="left:1230px;top:713px;width:117px;height:19px;background:#3f5799"></div>
<div class="t" style="left:1234px;top:716px;font-size:12.3px;color:#fff;transform:scaleX(0.995);transform-origin:0 0;">Statistics</div>
<svg class="a" style="left:1175px;top:714px" width="50" height="17"><path d="M0 6 L9 6 L4.5 11 Z" fill="#c0c8ea"/><path d="M19 2.5 L25 2.5 M20 2.5 L20 9.5 M24 2.5 L24 9.5 M18 9.5 L26 9.5 M22 9.5 L22 14.5" stroke="#c0c8ea" stroke-width="1.6" fill="none"/><path d="M33 3.5 L41.5 12 M41.5 3.5 L33 12" stroke="#c0c8ea" stroke-width="1.8"/></svg>
<svg class="a" style="left:1298px;top:714px" width="50" height="17"><path d="M0 6 L9 6 L4.5 11 Z" fill="#c0c8ea"/><path d="M19 2.5 L25 2.5 M20 2.5 L20 9.5 M24 2.5 L24 9.5 M18 9.5 L26 9.5 M22 9.5 L22 14.5" stroke="#c0c8ea" stroke-width="1.6" fill="none"/><path d="M33 3.5 L41.5 12 M41.5 3.5 L33 12" stroke="#c0c8ea" stroke-width="1.8"/></svg>
<div class="a" style="left:1px;top:732px;width:1208px;height:84px;background:#fff;overflow:hidden">
<div class="t" style="left:1px;top:-6px;font-size:12px;color:#d020d0;transform:scaleX(0.957);transform-origin:0 0;">8/12/2023 3:12:01 PM</div>
<div class="t" style="left:134.6px;top:-6px;font-size:12px;color:#d020d0;transform:scaleX(0.910);transform-origin:0 0;">Trace</div>
<div class="t" style="left:193.6px;top:-6px;font-size:12px;color:#d020d0;transform:scaleX(1.008);transform-origin:0 0;">Comparing files completed in 3 milliseconds</div>
<div class="t" style="left:1px;top:9px;font-size:12px;color:#d020d0;transform:scaleX(0.957);transform-origin:0 0;">8/12/2023 3:12:01 PM</div>
<div class="t" style="left:134.6px;top:9px;font-size:12px;color:#d020d0;transform:scaleX(0.910);transform-origin:0 0;">Trace</div>
<div class="t" style="left:193.6px;top:9px;font-size:12px;color:#d020d0;transform:scaleX(0.993);transform-origin:0 0;">Processing comparison data completed in 2 milliseconds</div>
<div class="t" style="left:1px;top:24px;font-size:12px;color:#1a1ab4;transform:scaleX(0.957);transform-origin:0 0;">8/12/2023 3:12:01 PM</div>
<div class="t" style="left:134.6px;top:24px;font-size:12px;color:#1a1ab4;transform:scaleX(1.044);transform-origin:0 0;">Action</div>
<div class="t" style="left:193.6px;top:24px;font-size:12px;color:#1a1ab4;transform:scaleX(0.986);transform-origin:0 0;">Compared files &#x27;C:\Src\ExamDiff\Specs\TreeSitter Support\Tests\1.css&#x27; and &#x27;C:\Src\ExamDiff\Specs\TreeSitter Support\Tests\2.css&#x27;</div>
<div class="t" style="left:1px;top:39px;font-size:12px;color:#000;transform:scaleX(0.957);transform-origin:0 0;">8/12/2023 3:12:01 PM</div>
<div class="t" style="left:134.6px;top:39px;font-size:12px;color:#000;transform:scaleX(0.935);transform-origin:0 0;">Results</div>
<div class="t" style="left:193.6px;top:39px;font-size:12px;color:#000;transform:scaleX(0.981);transform-origin:0 0;">3 differences: 10 lines, 1 inline difference in 1 changed line</div>
<div class="t" style="left:1px;top:54px;font-size:12px;color:#d020d0;transform:scaleX(0.957);transform-origin:0 0;">8/12/2023 3:12:01 PM</div>
<div class="t" style="left:134.6px;top:54px;font-size:12px;color:#d020d0;transform:scaleX(0.910);transform-origin:0 0;">Trace</div>
<div class="t" style="left:193.6px;top:54px;font-size:12px;color:#d020d0;transform:scaleX(0.988);transform-origin:0 0;">Scope tree generation for index 1 of 13 items completed in 303 milliseconds</div>
<div class="t" style="left:1px;top:69px;font-size:12px;color:#d020d0;transform:scaleX(0.957);transform-origin:0 0;">8/12/2023 3:12:01 PM</div>
<div class="t" style="left:134.6px;top:69px;font-size:12px;color:#d020d0;transform:scaleX(0.910);transform-origin:0 0;">Trace</div>
<div class="t" style="left:193.6px;top:69px;font-size:12px;color:#d020d0;">Scope tree control building for index 1 of 13 items completed in 1 milliseconds</div>
</div>
<div class="a" style="left:1209px;top:732px;width:16px;height:99px;background:#f0f0f0"></div>
<div class="a" style="left:1209px;top:775px;width:16px;height:17px;background:#cdcdcd"></div>
<svg class="a" style="left:1213px;top:738px" width="8" height="8"><path d="M1 5 L4 2 L7 5" fill="none" stroke="#444" stroke-width="1.9"/></svg>
<svg class="a" style="left:1213px;top:802px" width="8" height="8"><path d="M1 2 L4 5 L7 2" fill="none" stroke="#444" stroke-width="1.9"/></svg>
<div class="a" style="left:1px;top:816px;width:1208px;height:15px;background:#f0f0f0"></div>
<svg class="a" style="left:5px;top:820px" width="8" height="8"><path d="M5 1 L2 4 L5 7" fill="none" stroke="#c4c4c4" stroke-width="1.9"/></svg>
<svg class="a" style="left:1195px;top:820px" width="8" height="8"><path d="M2 1 L5 4 L2 7" fill="none" stroke="#c4c4c4" stroke-width="1.9"/></svg>
<div class="a" style="left:1230px;top:732px;width:117px;height:99px;background:#fff"></div>
<svg class="a" style="left:1240px;top:740px" width="100" height="90" viewBox="1240 740 100 90"><defs><linearGradient id="pg" x1="0" x2="1" y1="0" y2="0"><stop offset="0" stop-color="#2e2e2e"/><stop offset="1" stop-color="#0c0c0c"/></linearGradient></defs><circle cx="1288.5" cy="782.2" r="28.5" fill="url(#pg)"/><path d="M1288.5,782.2 L1317.00,782.20 A28.5,28.5 0 0 1 1316.93,784.19 Z" fill="#d8e8f0"/><path d="M1288.5,782.2 L1316.93,784.19 A28.5,28.5 0 0 1 1315.75,790.53 Z" fill="#1a30e0"/><path d="M1288.5,782.2 L1315.75,790.53 A28.5,28.5 0 0 1 1315.45,791.48 Z" fill="#e8d0e0"/><path d="M1288.5,782.2 L1315.45,791.48 A28.5,28.5 0 0 1 1311.56,798.95 Z" fill="#9a1a50"/></svg>
<div class="a" style="left:0;top:832px;width:1349px;height:22px;background:#3f5799"></div>
<div class="t" style="left:4px;top:837px;font-size:12px;color:#fff;transform:scaleX(0.984);transform-origin:0 0;">3 differences: 10 lines, 1 inline difference in 1 changed line</div>
<div class="a" style="left:934px;top:835px;width:64px;height:17px;background:#c4c4c4"></div>
<div class="t" style="left:936.5px;top:837px;font-size:12px;color:#a0204a;transform:scaleX(0.977);transform-origin:0 0;">Added(5,0)</div>
<div class="a" style="left:1002px;top:835px;width:69px;height:17px;background:#e4e4f0"></div>
<div class="t" style="left:1004.5px;top:837px;font-size:12px;color:#2020c0;transform:scaleX(0.954);transform-origin:0 0;">Deleted(4,0)</div>
<div class="a" style="left:1075px;top:835px;width:67px;height:17px;background:#fffac8"></div>
<div class="t" style="left:1077.0px;top:837px;font-size:12px;color:#205a30;transform:scaleX(0.978);transform-origin:0 0;">Changed(1)</div>
<div class="a" style="left:1147px;top:835px;width:130px;height:17px;background:#b8dcf8"></div>
<div class="t" style="left:1149.1px;top:837px;font-size:12px;color:#c848d8;transform:scaleX(0.988);transform-origin:0 0;">Changed in changed(1)</div>
<div class="a" style="left:1281px;top:835px;width:47px;height:17px;background:#f0f0f0"></div>
<div class="t" style="left:1282.8px;top:837px;font-size:12px;color:#3a8a3a;transform:scaleX(1.015);transform-origin:0 0;">Ignored</div>
<svg class="a" style="left:1334px;top:839px" width="14" height="14"><rect x="9" y="1" width="2" height="2" fill="#b8c0e0"/><rect x="6" y="4" width="2" height="2" fill="#b8c0e0"/><rect x="9" y="4" width="2" height="2" fill="#b8c0e0"/><rect x="3" y="7" width="2" height="2" fill="#b8c0e0"/><rect x="6" y="7" width="2" height="2" fill="#b8c0e0"/><rect x="9" y="7" width="2" height="2" fill="#b8c0e0"/><rect x="0" y="10" width="2" height="2" fill="#b8c0e0"/><rect x="3" y="10" width="2" height="2" fill="#b8c0e0"/><rect x="6" y="10" width="2" height="2" fill="#b8c0e0"/><rect x="9" y="10" width="2" height="2" fill="#b8c0e0"/></svg>
<svg class="a" style="left:0;top:0" width="1349" height="130"><defs>
<radialGradient id="gRed" cx="0.35" cy="0.35" r="0.7"><stop offset="0" stop-color="#ff8060"/><stop offset="0.5" stop-color="#e82a10"/><stop offset="1" stop-color="#a01008"/></radialGradient>
<radialGradient id="gOr" cx="0.4" cy="0.35" r="0.7"><stop offset="0" stop-color="#fff8a0"/><stop offset="0.5" stop-color="#f8d820"/><stop offset="1" stop-color="#e0a800"/></radialGradient>
<linearGradient id="gGreen" x1="0" y1="0" x2="0" y2="1"><stop offset="0" stop-color="#7ce07a"/><stop offset="1" stop-color="#2eae30"/></linearGradient>
<linearGradient id="gYel" x1="0" y1="0" x2="0" y2="1"><stop offset="0" stop-color="#fff090"/><stop offset="1" stop-color="#f0c830"/></linearGradient>
<linearGradient id="gYel2" x1="0" y1="0" x2="0" y2="1"><stop offset="0" stop-color="#fff070"/><stop offset="1" stop-color="#f0c000"/></linearGradient>
<linearGradient id="gGray" x1="0" y1="0" x2="0" y2="1"><stop offset="0" stop-color="#e8e8e8"/><stop offset="1" stop-color="#a8a8a8"/></linearGradient>
<linearGradient id="gWinG" x1="0" y1="0" x2="0" y2="1"><stop offset="0" stop-color="#ffffff"/><stop offset="1" stop-color="#d8f0d8"/></linearGradient>
<linearGradient id="gWinR" x1="0" y1="0" x2="0" y2="1"><stop offset="0" stop-color="#ffffff"/><stop offset="1" stop-color="#f8d8dc"/></linearGradient>
<linearGradient id="gWinB" x1="0" y1="0" x2="0" y2="1"><stop offset="0" stop-color="#ffffff"/><stop offset="1" stop-color="#dce4f4"/></linearGradient>
<linearGradient id="gFun" x1="0" y1="0" x2="1" y2="0"><stop offset="0" stop-color="#888c98"/><stop offset="0.45" stop-color="#f4f6fa"/><stop offset="1" stop-color="#7a7e8a"/></linearGradient>
<linearGradient id="gBin" x1="0" y1="0" x2="1" y2="0"><stop offset="0" stop-color="#8a8a90"/><stop offset="0.5" stop-color="#e0e0e4"/><stop offset="1" stop-color="#8a8a90"/></linearGradient>
<radialGradient id="gGear" cx="0.4" cy="0.35" r="0.7"><stop offset="0" stop-color="#f4f4f6"/><stop offset="1" stop-color="#a8a8b0"/></radialGradient>
<linearGradient id="gSq" x1="0" y1="0" x2="0" y2="1"><stop offset="0" stop-color="#fff060"/><stop offset="1" stop-color="#f0c800"/></linearGradient>
</defs><rect x="11" y="63" width="1.2" height="1.2" fill="#3c4458"/><rect x="15" y="63" width="1.2" height="1.2" fill="#3c4458"/><rect x="13" y="65" width="1.2" height="1.2" fill="#3c4458"/><rect x="11" y="67" width="1.2" height="1.2" fill="#3c4458"/><rect x="15" y="67" width="1.2" height="1.2" fill="#3c4458"/><rect x="13" y="69" width="1.2" height="1.2" fill="#3c4458"/><rect x="11" y="71" width="1.2" height="1.2" fill="#3c4458"/><rect x="15" y="71" width="1.2" height="1.2" fill="#3c4458"/><rect x="13" y="73" width="1.2" height="1.2" fill="#3c4458"/><rect x="11" y="75" width="1.2" height="1.2" fill="#3c4458"/><rect x="15" y="75" width="1.2" height="1.2" fill="#3c4458"/><rect x="13" y="77" width="1.2" height="1.2" fill="#3c4458"/><rect x="11" y="79" width="1.2" height="1.2" fill="#3c4458"/><rect x="15" y="79" width="1.2" height="1.2" fill="#3c4458"/><rect x="13" y="81" width="1.2" height="1.2" fill="#3c4458"/><rect x="11" y="83" width="1.2" height="1.2" fill="#3c4458"/><rect x="15" y="83" width="1.2" height="1.2" fill="#3c4458"/><rect x="13" y="85" width="1.2" height="1.2" fill="#3c4458"/><rect x="11" y="87" width="1.2" height="1.2" fill="#3c4458"/><rect x="15" y="87" width="1.2" height="1.2" fill="#3c4458"/><rect x="11" y="97" width="1.2" height="1.2" fill="#3c4458"/><rect x="15" y="97" width="1.2" height="1.2" fill="#3c4458"/><rect x="13" y="99" width="1.2" height="1.2" fill="#3c4458"/><rect x="11" y="101" width="1.2" height="1.2" fill="#3c4458"/><rect x="15" y="101" width="1.2" height="1.2" fill="#3c4458"/><rect x="13" y="103" width="1.2" height="1.2" fill="#3c4458"/><rect x="11" y="105" width="1.2" height="1.2" fill="#3c4458"/><rect x="15" y="105" width="1.2" height="1.2" fill="#3c4458"/><rect x="13" y="107" width="1.2" height="1.2" fill="#3c4458"/><rect x="11" y="109" width="1.2" height="1.2" fill="#3c4458"/><rect x="15" y="109" width="1.2" height="1.2" fill="#3c4458"/><rect x="13" y="111" width="1.2" height="1.2" fill="#3c4458"/><rect x="11" y="113" width="1.2" height="1.2" fill="#3c4458"/><rect x="15" y="113" width="1.2" height="1.2" fill="#3c4458"/><rect x="13" y="115" width="1.2" height="1.2" fill="#3c4458"/><rect x="11" y="117" width="1.2" height="1.2" fill="#3c4458"/><rect x="15" y="117" width="1.2" height="1.2" fill="#3c4458"/><rect x="13" y="119" width="1.2" height="1.2" fill="#3c4458"/><rect x="11" y="121" width="1.2" height="1.2" fill="#3c4458"/><rect x="15" y="121" width="1.2" height="1.2" fill="#3c4458"/><rect x="145" y="62" width="1" height="27" fill="#9aa2bc"/><rect x="241" y="62" width="1" height="27" fill="#9aa2bc"/><rect x="427" y="62" width="1" height="27" fill="#9aa2bc"/><rect x="553" y="62" width="1" height="27" fill="#9aa2bc"/><rect x="740" y="62" width="1" height="27" fill="#9aa2bc"/><rect x="865" y="62" width="1" height="27" fill="#9aa2bc"/><rect x="962" y="62" width="1" height="27" fill="#9aa2bc"/><rect x="1087" y="62" width="1" height="27" fill="#9aa2bc"/><rect x="1221" y="62" width="1" height="27" fill="#9aa2bc"/><g transform="translate(26,62) scale(1.0)">
<defs></defs>
<circle cx="6.5" cy="10" r="6.3" fill="url(#gRed)" stroke="#a01010" stroke-width="0.6"/>
<path d="M5.5 1.5 Q7 2.5 8 5" stroke="#111" stroke-width="1.6" fill="none"/>
<circle cx="16.5" cy="16" r="7.3" fill="url(#gOr)" stroke="#d0a000" stroke-width="0.6"/>
<path d="M13 9 Q14 5.5 17.5 7.5 Q16 10 13 9 Z M17 9 Q19.5 5 23 7 Q21 10.5 17 9 Z" fill="#39b43a" stroke="#1e7a20" stroke-width="0.5"/>
</g><g transform="translate(57,63)">
<path d="M1 11 Q1.5 1 11.5 1 Q16.5 1 19 4.5 L21.5 1.5 L21.5 11 L12.5 11 L15.5 8 Q14 6 11.5 6 Q7 6 6.5 11 Z" fill="url(#gGreen)" stroke="#1f8a24" stroke-width="0.9" stroke-linejoin="round"/>
<path d="M21 12 Q20.5 22 10.5 22 Q5.5 22 3 18.5 L0.5 21.5 L0.5 12 L9.5 12 L6.5 15 Q8 17 10.5 17 Q15 17 15.5 12 Z" fill="url(#gGreen)" stroke="#1f8a24" stroke-width="0.9" stroke-linejoin="round"/>
</g><g transform="translate(87,63)">
<path d="M0.5 2 L2 0.5 L15 0.5 L21.5 7 L21.5 23.5 L0.5 23.5 Z" fill="#f6f6f8" stroke="#a0a0a8" stroke-width="0.9"/>
<path d="M9 8 L14 8 M11 10 L16 10" stroke="#b8b8c0" stroke-width="0.8"/>
<path d="M1 9 Q1 3 7 2 L6 0 L11 3.5 L7 8 L7 5.5 Q4 6 4 10 Z" fill="#3cb83c" stroke="#1f8a24" stroke-width="0.7"/>
<path d="M22 14 Q22 20 16 21.5 L17 23.5 L11.5 20 L16 15.5 L16 18 Q19 17.5 19 13.5 Z" fill="#3cb83c" stroke="#1f8a24" stroke-width="0.7"/>
</g><g transform="translate(116,66)">
<path d="M0.5 3 L8 3 L10 5 L20 5 L20 19.5 L0.5 19.5 Z" fill="#f0d060" stroke="#c8a020" stroke-width="0.9"/>
<path d="M0.5 8 L20 8 L20 19.5 L0.5 19.5 Z" fill="url(#gYel)" stroke="#c8a020" stroke-width="0.9"/>
<path d="M18 5 L24 11 L20.5 11 L20.5 20.5 L15.5 20.5 L15.5 11 L12 11 Z" fill="#3cb83c" stroke="#1f7a24" stroke-width="0.9"/>
</g><g transform="translate(154,65) scale(1.0)">
<path d="M0.5 0.5 L19.5 0.5 L19.5 19.5 L2 19.5 L0.5 18 Z" fill="#3cb83c" stroke="#1f8a24" stroke-width="1"/>
<rect x="3" y="1.5" width="14" height="8.5" fill="#f0f8f0"/>
<rect x="4.5" y="13" width="11" height="6.5" fill="#f0f0f0"/>
<rect x="6.5" y="14" width="2.5" height="5" fill="#1f8a24"/>
</g><g transform="translate(184,65) scale(1.0)">
<path d="M0.5 0.5 L19.5 0.5 L19.5 19.5 L2 19.5 L0.5 18 Z" fill="#e03838" stroke="#a01818" stroke-width="1"/>
<rect x="3" y="1.5" width="14" height="8.5" fill="#fbf0f0"/>
<rect x="4.5" y="13" width="11" height="6.5" fill="#f0f0f0"/>
<rect x="6.5" y="14" width="2.5" height="5" fill="#a01818"/>
</g><g transform="translate(218,65) scale(0.8)">
<path d="M0.5 0.5 L19.5 0.5 L19.5 19.5 L2 19.5 L0.5 18 Z" fill="#3a78d0" stroke="#1f4a9a" stroke-width="1"/>
<rect x="3" y="1.5" width="14" height="8.5" fill="#f4f6f8"/>
<rect x="4.5" y="13" width="11" height="6.5" fill="#f0f0f0"/>
<rect x="6.5" y="14" width="2.5" height="5" fill="#1f4a9a"/>
</g><g transform="translate(213,69.5) scale(0.82)">
<path d="M0.5 0.5 L19.5 0.5 L19.5 19.5 L2 19.5 L0.5 18 Z" fill="#3a78d0" stroke="#1f4a9a" stroke-width="1"/>
<rect x="3" y="1.5" width="14" height="8.5" fill="#f4f6f8"/>
<rect x="4.5" y="13" width="11" height="6.5" fill="#f0f0f0"/>
<rect x="6.5" y="14" width="2.5" height="5" fill="#1f4a9a"/>
</g><g transform="translate(248,64)">
<rect x="3.5" y="0.5" width="17" height="21" fill="#f4f6fb" stroke="#7a86a8" stroke-width="0.9"/>
<path d="M19 -1 L23 3 L5 21 L0.5 22.5 L2 18 Z" fill="#4cc04c" stroke="#1f7a24" stroke-width="0.9"/>
<path d="M19 -1 L23 3 L21.5 4.5 L17.5 0.5 Z" fill="#e03030"/>
<path d="M0.5 22.5 L2 18 L5 21 Z" fill="#e8d8a0"/>
<path d="M0.5 22.5 L1.2 20.5 L2.5 21.8 Z" fill="#222"/>
</g><g transform="translate(278,64)">
<rect x="3.5" y="0.5" width="17" height="21" fill="#f4f6fb" stroke="#7a86a8" stroke-width="0.9"/>
<path d="M19 -1 L23 3 L5 21 L0.5 22.5 L2 18 Z" fill="#e03838" stroke="#901010" stroke-width="0.9"/>
<path d="M19 -1 L23 3 L21.5 4.5 L17.5 0.5 Z" fill="#e03030"/>
<path d="M0.5 22.5 L2 18 L5 21 Z" fill="#e8d8a0"/>
<path d="M0.5 22.5 L1.2 20.5 L2.5 21.8 Z" fill="#222"/>
</g><g transform="translate(309,65)">
<path d="M8 0.5 L16 19 L0 19 Z" fill="url(#gYel2)" stroke="#d0a800" stroke-width="0.6"/>

<g transform="translate(11,9.5)">
<rect x="0.5" y="0.5" width="11" height="11.5" fill="#3a78d0" stroke="#1f4a9a" stroke-width="0.9"/>
<rect x="2" y="1.5" width="8" height="4" fill="#f0f4fa"/>
<rect x="3" y="8" width="6" height="4" fill="#f0f0f0"/>
<rect x="4" y="8.5" width="1.5" height="3.5" fill="#1f4a9a"/>
</g>
</g><g transform="translate(339,64)">
<path d="M8 0.5 L16 19 L0 19 Z" fill="url(#gYel2)" stroke="#d0a800" stroke-width="0.6"/>
<circle cx="7" cy="17" r="4" fill="#4aa0d8" stroke="#2a6aa0" stroke-width="0.6"/>
<g transform="translate(11,9.5)">
<rect x="0.5" y="0.5" width="11" height="11.5" fill="#3a78d0" stroke="#1f4a9a" stroke-width="0.9"/>
<rect x="2" y="1.5" width="8" height="4" fill="#f0f4fa"/>
<rect x="3" y="8" width="6" height="4" fill="#f0f0f0"/>
<rect x="4" y="8.5" width="1.5" height="3.5" fill="#1f4a9a"/>
</g>
</g><g transform="translate(369,63)">
<rect x="4.5" y="0.5" width="13" height="10" fill="#f8f8f8" stroke="#9a9a9a" stroke-width="0.8"/>
<rect x="0.5" y="8" width="21" height="13" rx="1.5" fill="url(#gGray)" stroke="#6a6a6a" stroke-width="0.9"/>
<rect x="3" y="8.5" width="16" height="3.5" fill="#444"/>
<rect x="15" y="14" width="4" height="2" fill="#fff" stroke="#888" stroke-width="0.4"/>
<rect x="3.5" y="18.5" width="15" height="4" fill="#f0f0f0" stroke="#333" stroke-width="1"/>
</g><g transform="translate(401,64)">
<path d="M0.5 0.5 L12 0.5 L17.5 6 L17.5 21.5 L0.5 21.5 Z" fill="#eef1f8" stroke="#8a94b0" stroke-width="0.9"/>
<circle cx="8.5" cy="10.5" r="5.3" fill="#e8eef8" stroke="#3a4250" stroke-width="1.8"/>
<path d="M12.5 14.5 L19 21" stroke="#3a4250" stroke-width="2.6" stroke-linecap="round"/>
</g><g transform="translate(436,64)">
<path d="M5 9.5 Q9 3.5 13.5 4.5 Q19 6 18.5 12.5 Q18 18.5 8 20" fill="none" stroke="#9a9aa0" stroke-width="5.2" stroke-linecap="round"/>
<path d="M5 9.5 Q9 3.5 13.5 4.5 Q19 6 18.5 12.5 Q18 18.5 8 20" fill="none" stroke="#c4c4c8" stroke-width="3.4" stroke-linecap="round"/>
<path d="M0.5 0.5 L1 11.5 L10.5 10 Z" fill="#c4c4c8" stroke="#9a9aa0" stroke-width="0.9" stroke-linejoin="round"/>
</g><g transform="translate(486,64) scale(-1,1)">
<path d="M5 9.5 Q9 3.5 13.5 4.5 Q19 6 18.5 12.5 Q18 18.5 8 20" fill="none" stroke="#9a9aa0" stroke-width="5.2" stroke-linecap="round"/>
<path d="M5 9.5 Q9 3.5 13.5 4.5 Q19 6 18.5 12.5 Q18 18.5 8 20" fill="none" stroke="#c4c4c8" stroke-width="3.4" stroke-linecap="round"/>
<path d="M0.5 0.5 L1 11.5 L10.5 10 Z" fill="#c4c4c8" stroke="#9a9aa0" stroke-width="0.9" stroke-linejoin="round"/>
</g><g transform="translate(494,65)">
<path d="M2 7.5 L12.5 7.5 L9 4 Q8 1.5 10.5 1 L12 1 L22 10 L12 19 L10.5 19 Q8 18.5 9 16 L12.5 12.5 L2 12.5 Q0 12.5 0 10 Q0 7.5 2 7.5 Z" fill="url(#gGreen)" stroke="#1f8a24" stroke-width="0.9" stroke-linejoin="round"/>
</g><g transform="translate(548,65) scale(-1,1)">
<path d="M2 7.5 L12.5 7.5 L9 4 Q8 1.5 10.5 1 L12 1 L22 10 L12 19 L10.5 19 Q8 18.5 9 16 L12.5 12.5 L2 12.5 Q0 12.5 0 10 Q0 7.5 2 7.5 Z" fill="url(#gGreen)" stroke="#1f8a24" stroke-width="0.9" stroke-linejoin="round"/>
</g><g transform="translate(560,65)">
<rect x="0.5" y="0.5" width="23" height="19" fill="url(#gWinG)" stroke="#4ab04a" stroke-width="1"/>
<rect x="1" y="1" width="22" height="1.6" fill="#5ac05a"/>
</g><g transform="translate(590,65)">
<rect x="0.5" y="0.5" width="23" height="19" fill="url(#gWinR)" stroke="#d04040" stroke-width="1"/>
<rect x="1" y="1" width="22" height="1.6" fill="#e05050"/>
</g><rect x="617.5" y="60.5" width="29" height="29" fill="#fde9bd" stroke="#8a6a28" stroke-width="1"/><g transform="translate(620,64.5)">
<rect x="0.5" y="0.5" width="11" height="19.5" fill="url(#gWinG)" stroke="#4ab04a" stroke-width="1"/>
<rect x="1" y="1" width="10" height="2.3" fill="#5ac05a"/>
<rect x="11.5" y="0.5" width="11" height="19.5" fill="url(#gWinR)" stroke="#d04040" stroke-width="1"/>
<rect x="12" y="1" width="10" height="2.3" fill="#e05050"/>
</g><g transform="translate(650,64.5)">
<rect x="0.5" y="0.5" width="22" height="20" fill="url(#gWinB)" stroke="#2a64c0" stroke-width="1"/>
<path d="M11.5 0.5 V20.5 M0.5 10.5 H22.5" stroke="#2a64c0" stroke-width="1"/>
<rect x="1" y="1" width="21" height="2" fill="#3a78d0"/>
<rect x="1" y="11" width="21" height="2" fill="#3a78d0"/>
</g><rect x="677.5" y="60.5" width="29" height="29" fill="#fde9bd" stroke="#8a6a28" stroke-width="1"/><rect x="707.5" y="60.5" width="29" height="29" fill="#fde9bd" stroke="#8a6a28" stroke-width="1"/><g transform="translate(680,64.5)">
<rect x="0.5" y="0.5" width="22" height="20" fill="url(#gWinB)" stroke="#2a64c0" stroke-width="1"/>
<path d="M11.5 0.5 V20.5 M0.5 10.5 H22.5" stroke="#2a64c0" stroke-width="1"/>
<rect x="1" y="1" width="21" height="2" fill="#3a78d0"/>
<path d="M22 5 L16 5 L16 2 L9 8 L16 13.5 L16 10.5 L22 10.5 Z" fill="#3cb83c" stroke="#1f8a24" stroke-width="0.8"/>
<path d="M0.5 10 L7 10 L7 7 L14 13 L7 19 L7 16 L0.5 16 Z" fill="#3cb83c" stroke="#1f8a24" stroke-width="0.8"/>
</g><g transform="translate(713,66)">
<rect x="0.5" y="0.5" width="17" height="17" fill="#eef0f6" stroke="#5a6270" stroke-width="1"/>
<rect x="2.5" y="2.5" width="13" height="13" fill="#fafafa" stroke="#a0a8c0" stroke-width="0.8"/>
<path d="M4 9 L7.5 12.5 L14 4.5" fill="none" stroke="#22a030" stroke-width="2.6"/>
</g><rect x="743.5" y="60.5" width="29" height="29" fill="#fde9bd" stroke="#8a6a28" stroke-width="1"/><g transform="translate(746,64)">
<path d="M0.5 2 L11 13 L11 22.5 Q12 23.5 13 22.5 L13 13 L23.5 2 Z" fill="url(#gFun)" stroke="#484c58" stroke-width="0.9"/>
<ellipse cx="12" cy="2" rx="11.5" ry="1.6" fill="#d0d4dc" stroke="#484c58" stroke-width="0.8"/>
<rect x="12" y="12" width="12" height="3" fill="#4cc04c" stroke="#2a8a2a" stroke-width="0.5"/><rect x="12" y="20" width="12" height="3" fill="#4cc04c" stroke="#2a8a2a" stroke-width="0.5"/><rect x="12" y="16" width="12" height="3" fill="#d82020" stroke="#901010" stroke-width="0.5"/>
</g><g transform="translate(776,64)">
<path d="M0.5 2 L11 13 L11 22.5 Q12 23.5 13 22.5 L13 13 L23.5 2 Z" fill="url(#gFun)" stroke="#484c58" stroke-width="0.9"/>
<ellipse cx="12" cy="2" rx="11.5" ry="1.6" fill="#d0d4dc" stroke="#484c58" stroke-width="0.8"/>
<rect x="12" y="16" width="12" height="3" fill="#d82020" stroke="#901010" stroke-width="0.5"/>
</g><g transform="translate(806,64)">
<path d="M0.5 2 L11 13 L11 22.5 Q12 23.5 13 22.5 L13 13 L23.5 2 Z" fill="url(#gFun)" stroke="#484c58" stroke-width="0.9"/>
<ellipse cx="12" cy="2" rx="11.5" ry="1.6" fill="#d0d4dc" stroke="#484c58" stroke-width="0.8"/>
<rect x="12" y="12" width="12" height="3" fill="#4cc04c" stroke="#2a8a2a" stroke-width="0.5"/><rect x="12" y="20" width="12" height="3" fill="#4cc04c" stroke="#2a8a2a" stroke-width="0.5"/>
</g><g transform="translate(836,64)">
<path d="M0.5 2 L11 13 L11 22.5 Q12 23.5 13 22.5 L13 13 L23.5 2 Z" fill="url(#gFun)" stroke="#484c58" stroke-width="0.9"/>
<ellipse cx="12" cy="2" rx="11.5" ry="1.6" fill="#d0d4dc" stroke="#484c58" stroke-width="0.8"/>
<path d="M12 23 L15 18" stroke="#555" stroke-width="0.9"/><circle cx="19" cy="14" r="4.5" fill="#eaf0f8" stroke="#333" stroke-width="1"/>
</g><g transform="translate(874,65)">
<path d="M10 0.5 L19.5 10 L14 10 L14 21 L6 21 L6 10 L0.5 10 Z" fill="#f0f0f4" stroke="#d8dae0" stroke-width="0.9" stroke-linejoin="round"/>
</g><rect x="905.5" y="66.5" width="17.5" height="17.5" fill="url(#gSq)" stroke="#d0a800" stroke-width="0.9"/><g transform="translate(934,64)">
<path d="M7.2 2 Q10 -0.8 12.8 2 L12.8 11 L15.5 8.3 Q18 6.8 19.8 9 Q20.5 10.5 19.5 11.8 L10 21.5 L0.5 11.8 Q-0.5 10.5 0.2 9 Q2 6.8 4.5 8.3 L7.2 11 Z" fill="#f4e400" stroke="#c8b000" stroke-width="0.9" stroke-linejoin="round"/>
</g><g transform="translate(969,64)">
<rect x="3" y="0.5" width="5" height="4" fill="#c8c8cc" stroke="#707074" stroke-width="0.7"/>
<rect x="14" y="0.5" width="5" height="4" fill="#c8c8cc" stroke="#707074" stroke-width="0.7"/>
<path d="M2 5 L9 5 L10 21 L0.5 21 Z" fill="url(#gBin)" stroke="#707074" stroke-width="0.8"/>
<path d="M13 5 L20 5 L21.5 21 L12 21 Z" fill="url(#gBin)" stroke="#707074" stroke-width="0.8"/>
<rect x="8" y="7" width="6" height="4" fill="#a8a8ac" stroke="#707074" stroke-width="0.6"/>

</g><g transform="translate(999,64)">
<rect x="3" y="0.5" width="5" height="4" fill="#c8c8cc" stroke="#707074" stroke-width="0.7"/>
<rect x="14" y="0.5" width="5" height="4" fill="#c8c8cc" stroke="#707074" stroke-width="0.7"/>
<path d="M2 5 L9 5 L10 21 L0.5 21 Z" fill="url(#gBin)" stroke="#707074" stroke-width="0.8"/>
<path d="M13 5 L20 5 L21.5 21 L12 21 Z" fill="url(#gBin)" stroke="#707074" stroke-width="0.8"/>
<rect x="8" y="7" width="6" height="4" fill="#a8a8ac" stroke="#707074" stroke-width="0.6"/>
<path d="M9 15 L16 15 L16 12 L22 17.5 L16 22.5 L16 19.5 L9 19.5 Z" fill="#b8b8bc" stroke="#7a7a80" stroke-width="0.7"/>
</g><g transform="translate(1028,64)">
<rect x="3" y="0.5" width="5" height="4" fill="#c8c8cc" stroke="#707074" stroke-width="0.7"/>
<rect x="14" y="0.5" width="5" height="4" fill="#c8c8cc" stroke="#707074" stroke-width="0.7"/>
<path d="M2 5 L9 5 L10 21 L0.5 21 Z" fill="url(#gBin)" stroke="#707074" stroke-width="0.8"/>
<path d="M13 5 L20 5 L21.5 21 L12 21 Z" fill="url(#gBin)" stroke="#707074" stroke-width="0.8"/>
<rect x="8" y="7" width="6" height="4" fill="#a8a8ac" stroke="#707074" stroke-width="0.6"/>
<path d="M14 15 L7 15 L7 12 L1 17.5 L7 22.5 L7 19.5 L14 19.5 Z" fill="#b8b8bc" stroke="#7a7a80" stroke-width="0.7"/>
</g><g transform="translate(1058,64)">
<text x="1.5" y="11.5" font-family="Liberation Sans" font-weight="bold" font-size="12.5" fill="#404654">A</text>
<text x="9.5" y="21.5" font-family="Liberation Sans" font-weight="bold" font-size="10" fill="#404654">A</text>
<text x="16" y="21.5" font-family="Liberation Sans" font-weight="bold" font-size="10" fill="#c4c6d0">B</text>
<path d="M1.5 13 Q2.5 19 8 20.5" stroke="#a8aab4" stroke-width="0.9" fill="none"/>
</g><g transform="translate(1097,64)">
<rect x="0.5" y="0.5" width="17" height="21" fill="#f4f6fa" stroke="#8090b0" stroke-width="0.9"/>
<rect x="2.5" y="4" width="2.5" height="3" fill="#4cc04c"/><rect x="6" y="4" width="9" height="3" fill="#4cc04c"/>
<rect x="2.5" y="9" width="6" height="3" fill="#3a78d0"/><rect x="9.5" y="9" width="5.5" height="3" fill="#3a78d0"/>
<rect x="2.5" y="14" width="3" height="3" fill="#d02020"/><rect x="6.5" y="14" width="8.5" height="3" fill="#d02020"/>
<path d="M21 10 L27 10 L24 13 Z" fill="#222"/>
</g><g transform="translate(1133,65)" fill="#283048">
<rect x="0" y="1" width="20" height="1.8"/><rect x="0" y="5" width="20" height="1.8"/><rect x="0" y="9" width="20" height="1.8"/>
<rect x="0" y="13" width="20" height="1.8"/><rect x="0" y="17" width="13" height="1.8"/>
</g><rect x="1158.5" y="60.5" width="28" height="29" fill="#fde9bd" stroke="#8a6a28" stroke-width="1"/><rect x="1187.5" y="60.5" width="30" height="29" fill="#fde9bd" stroke="#8a6a28" stroke-width="1"/><g transform="translate(1161,64)">
<defs><mask id="pzm" maskUnits="userSpaceOnUse" x="-5" y="-5" width="35" height="35"><rect x="-5" y="-5" width="35" height="35" fill="#fff"/>
<circle cx="6.2" cy="6.2" r="3.2" fill="#000"/><circle cx="15.8" cy="15.8" r="3.2" fill="#000"/></mask></defs>
<g mask="url(#pzm)">
<path d="M11 0.5 L21.5 11 L11 21.5 L0.5 11 Z" fill="#3a7ee0" stroke="#1a3f8a" stroke-width="1.2" stroke-linejoin="round"/>
<circle cx="18.3" cy="3.7" r="3.7" fill="#3a7ee0" stroke="#1a3f8a" stroke-width="1.2"/>
<circle cx="3.7" cy="18.3" r="3.7" fill="#3a7ee0" stroke="#1a3f8a" stroke-width="1.2"/>
<path d="M11 2 L20 11 L11 20 L2 11 Z" fill="#3a7ee0"/>
<circle cx="18.3" cy="3.7" r="3.1" fill="#3a7ee0"/><circle cx="3.7" cy="18.3" r="3.1" fill="#3a7ee0"/>
</g>
</g><g transform="translate(1188,63)">
<rect x="3.5" y="2.5" width="21" height="19" fill="#f4f6fa" stroke="#6a7288" stroke-width="0.9"/>
<rect x="6" y="5.5" width="8" height="2" fill="#d02020"/><rect x="6" y="9.5" width="12" height="2" fill="#3a78d0"/>
<rect x="6" y="13.5" width="7" height="2" fill="#3a78d0"/><rect x="12" y="16.5" width="8" height="2" fill="#4cc04c"/>
<path d="M25 0.5 L26.5 2 L12 17 L10 15 Z" fill="#d02020" stroke="#901010" stroke-width="0.6"/>
<path d="M10 15 L12 17 L8 22.5 Q4 25 3 24 Q5 21 6 17 Z" fill="#d8c070" stroke="#a08030" stroke-width="0.6"/>
</g><g transform="translate(1228,64)">
<polygon points="18.50,11.00 21.30,13.05 20.70,15.02 17.24,15.17 16.30,16.30 16.83,19.73 15.02,20.70 12.46,18.36 11.00,18.50 8.95,21.30 6.98,20.70 6.83,17.24 5.70,16.30 2.27,16.83 1.30,15.02 3.64,12.46 3.50,11.00 0.70,8.95 1.30,6.98 4.76,6.83 5.70,5.70 5.17,2.27 6.98,1.30 9.54,3.64 11.00,3.50 13.05,0.70 15.02,1.30 15.17,4.76 16.30,5.70 19.73,5.17 20.70,6.98 18.36,9.54" fill="url(#gGear)" stroke="#7a7a80" stroke-width="0.9" stroke-linejoin="round"/>
<circle cx="11" cy="11" r="3.3" fill="#d8dadc" stroke="#6a6a70" stroke-width="1.1"/>
</g><path d="M1256 81 L1263 81 L1259.5 85 Z" fill="#222"/></svg>
<svg class="a" style="left:605px;top:130px" width="60" height="20">
<path d="M1.5 7 L5 7 L5 5.5 L12 5.5 L12 7 L14.5 7 L14.5 17.5 L1.5 17.5 Z" fill="#f0d060" stroke="#c0a040" stroke-width="0.9"/>
<rect x="3.5" y="3" width="8" height="7" fill="#f8f8fc" stroke="#7a88a8" stroke-width="0.9"/>
<rect x="5" y="5" width="5" height="1" fill="#7a88a8"/><rect x="5" y="7" width="5" height="1" fill="#7a88a8"/>
<path d="M0.5 10.5 L15.5 10.5 L14.5 17.5 L1.5 17.5 Z" fill="url(#gYelH)" stroke="#c0a040" stroke-width="0.9"/>
<defs><linearGradient id="gYelH" x1="0" y1="0" x2="0" y2="1"><stop offset="0" stop-color="#fff080"/><stop offset="1" stop-color="#f0cc30"/></linearGradient></defs>
<path d="M23 8 L30 8 L26.5 12 Z" fill="#111"/>
<circle cx="41.7" cy="7.3" r="4.1" fill="url(#gRed)"/>
<path d="M41.5 1.8 L43 4" stroke="#111" stroke-width="1.1"/>
<circle cx="48.3" cy="12.2" r="4.8" fill="url(#gOr)"/>
<path d="M46 7.5 Q47.5 4.5 50 6.5 Q48 8.5 46 7.5 Z M49 7.5 Q51 4 53.5 6 Q51.5 9 49 7.5 Z" fill="#39b43a" stroke="#1e7a20" stroke-width="0.4"/>
</svg>
<svg class="a" style="left:1288px;top:130px" width="60" height="20">
<path d="M1.5 7 L5 7 L5 5.5 L12 5.5 L12 7 L14.5 7 L14.5 17.5 L1.5 17.5 Z" fill="#f0d060" stroke="#c0a040" stroke-width="0.9"/>
<rect x="3.5" y="3" width="8" height="7" fill="#f8f8fc" stroke="#7a88a8" stroke-width="0.9"/>
<rect x="5" y="5" width="5" height="1" fill="#7a88a8"/><rect x="5" y="7" width="5" height="1" fill="#7a88a8"/>
<path d="M0.5 10.5 L15.5 10.5 L14.5 17.5 L1.5 17.5 Z" fill="url(#gYelH)" stroke="#c0a040" stroke-width="0.9"/>
<defs><linearGradient id="gYelH" x1="0" y1="0" x2="0" y2="1"><stop offset="0" stop-color="#fff080"/><stop offset="1" stop-color="#f0cc30"/></linearGradient></defs>
<path d="M23 8 L30 8 L26.5 12 Z" fill="#111"/>
<circle cx="41.7" cy="7.3" r="4.1" fill="url(#gRed)"/>
<path d="M41.5 1.8 L43 4" stroke="#111" stroke-width="1.1"/>
<circle cx="48.3" cy="12.2" r="4.8" fill="url(#gOr)"/>
<path d="M46 7.5 Q47.5 4.5 50 6.5 Q48 8.5 46 7.5 Z M49 7.5 Q51 4 53.5 6 Q51.5 9 49 7.5 Z" fill="#39b43a" stroke="#1e7a20" stroke-width="0.4"/>
</svg></body></html>
